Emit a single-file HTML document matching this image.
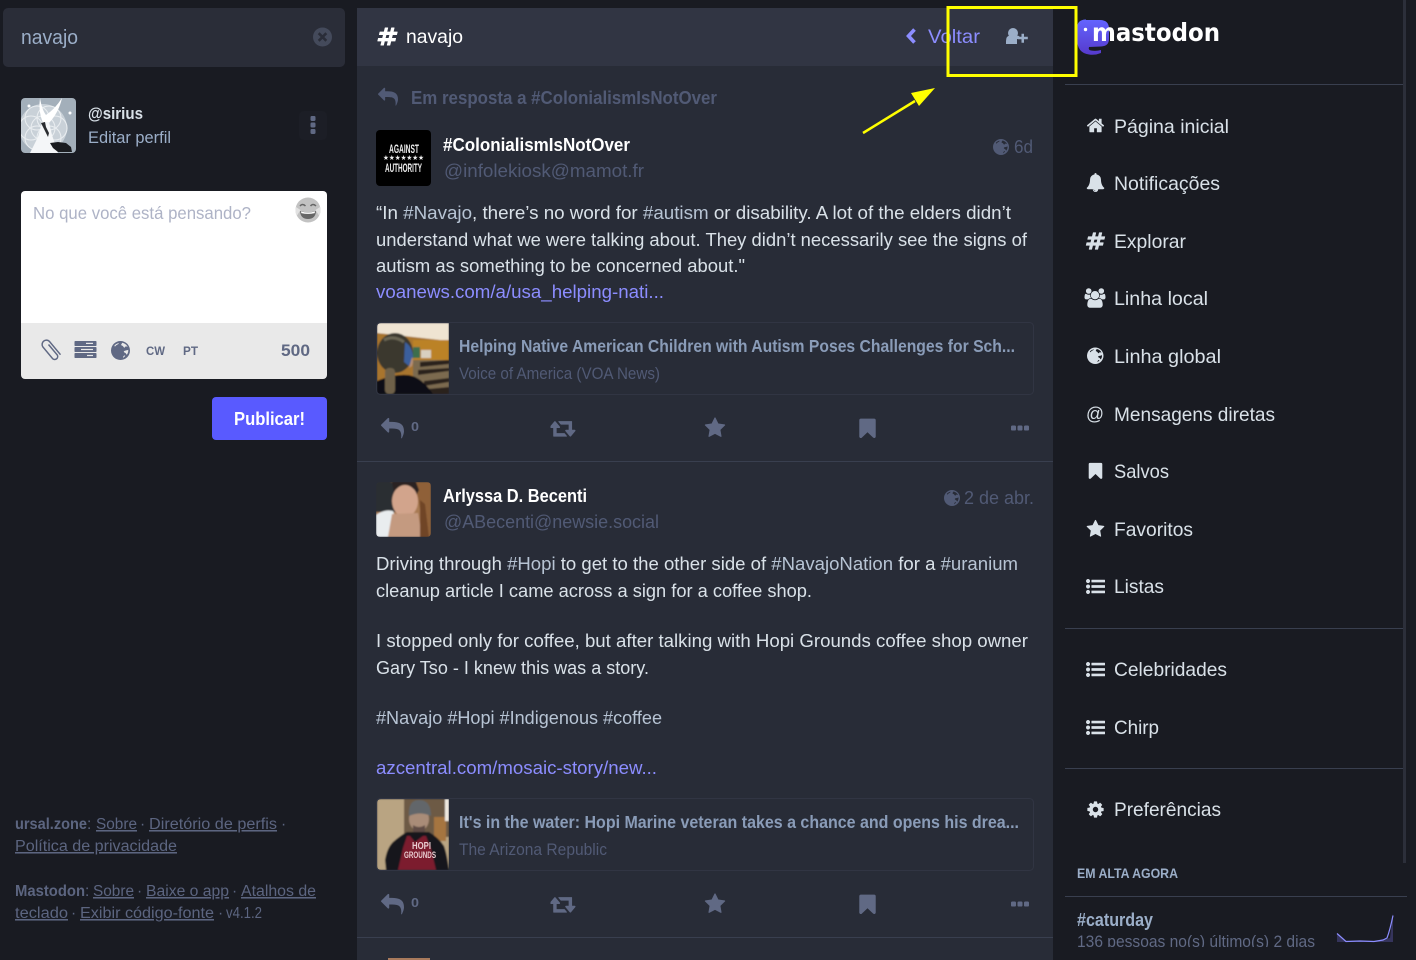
<!DOCTYPE html>
<html lang="pt"><head><meta charset="utf-8"><title>navajo - Mastodon</title>
<style>
html,body{margin:0;padding:0;width:1416px;height:960px;overflow:hidden;background:#191b22}
svg{display:block;font-family:"Liberation Sans",sans-serif}
text{white-space:pre}
.st{font-size:18.5px;fill:#d9e1e8}
.tag{fill:#b7c4d4}
.nav{font-size:19.5px;fill:#d9e1e8}
.ft{font-size:15.5px;fill:#5c6580}
.u{text-decoration:underline}
.h{font-size:18.5px;fill:#515a75}
.nm{font-size:18px;font-weight:bold;fill:#fff}
.ct{font-size:17.5px;font-weight:bold;fill:#8a9cb8}
.cs{font-size:16.5px;fill:#515a75}
</style></head><body>
<svg width="1416" height="960" viewBox="0 0 1416 960" xmlns="http://www.w3.org/2000/svg">
<defs>
<symbol id="reply" viewBox="0 0 1792 1792"><path d="M1792 1120q0 166-127 451-3 7-10.5 24t-13.5 30-13 22q-12 17-28 17-15 0-23.5-10t-8.5-25q0-9 2.5-26.5t2.5-23.5q5-68 5-123 0-101-17.5-181t-48.5-138.5-80-101-105.5-69.5-133-42.5-154-21.5-175.5-6h-224v256q0 26-19 45t-45 19-45-19l-512-512q-19-19-19-45t19-45l512-512q19-19 45-19t45 19 19 45v256h224q713 0 875 403 53 134 53 333z"/></symbol>
<symbol id="star" viewBox="0 0 1792 1792"><path d="M1728 647q0 22-26 48l-363 354 86 500q1 7 1 20 0 21-10.5 35.5t-30.5 14.5q-19 0-40-12l-449-236-449 236q-22 12-40 12-21 0-31.5-14.5t-10.5-35.5q0-6 2-20l86-500-364-354q-25-27-25-48 0-37 56-46l502-73 225-455q19-41 49-41t49 41l225 455 502 73q56 9 56 46z"/></symbol>
<symbol id="bm" viewBox="0 0 1792 1792"><path d="M1420 128q23 0 44 9 33 13 52.5 41t19.5 62v1289q0 34-19.5 62t-52.5 41q-19 8-44 8-48 0-83-32l-441-424-441 424q-36 33-83 33-23 0-44-9-33-13-52.5-41t-19.5-62v-1289q0-34 19.5-62t52.5-41q21-9 44-9h1048z"/></symbol>
<symbol id="rt" viewBox="0 0 1920 1792"><path d="M1216 1504q0 13-9.5 22.5t-22.5 9.5h-960q-8 0-13.5-2t-9-7-5.5-8-3-11.5-1-11.5v-600h-192q-26 0-45-19t-19-45q0-24 15-41l320-384q19-22 49-22t49 22l320 384q15 17 15 41 0 26-19 45t-45 19h-192v384h576q16 0 25 11l160 192q7 10 7 21zm640-416q0 24-15 41l-320 384q-20 23-49 23t-49-23l-320-384q-15-17-15-41 0-26 19-45t45-19h192v-384h-576q-16 0-25-12l-160-192q-7-9-7-20 0-13 9.5-22.5t22.5-9.5h960q8 0 13.5 2t9 7 5.5 8 3 11.5 1 11.5v600h192q26 0 45 19t19 45z"/></symbol>
<symbol id="hash" viewBox="0 0 1792 1792"><path d="M991 1024l64-256h-254l-64 256h254zm768-504l-56 224q-7 24-31 24h-327l-64 256h311q15 0 25 12 10 14 6 28l-56 224q-5 24-31 24h-327l-81 328q-7 24-31 24h-224q-16 0-26-12-9-12-6-28l78-312h-254l-81 328q-7 24-31 24h-225q-15 0-25-12-9-12-6-28l78-312h-311q-15 0-25-12-9-12-6-28l56-224q7-24 31-24h327l64-256h-311q-15 0-25-12-10-14-6-28l56-224q5-24 31-24h327l81-328q7-24 32-24h224q15 0 25 12 9 12 6 28l-78 312h254l81-328q7-24 32-24h224q15 0 25 12 9 12 6 28l-78 312h311q15 0 25 12 9 12 6 28z"/></symbol>
<symbol id="home" viewBox="0 0 1792 1792"><path d="M1472 992v480q0 26-19 45t-45 19h-384v-384h-256v384h-384q-26 0-45-19t-19-45v-480q0-1 .5-3t.5-3l575-474 575 474q1 2 1 6zm223-69l-62 74q-8 9-21 11h-3q-13 0-21-7l-692-577-692 577q-12 8-24 7-13-2-21-11l-62-74q-8-10-7-23.5t11-21.5l719-599q32-26 76-26t76 26l244 204v-195q0-14 9-23t23-9h192q14 0 23 9t9 23v408l219 182q10 8 11 21.5t-7 23.5z"/></symbol>
<symbol id="bell" viewBox="0 0 1792 1792"><path d="M912 1696q0-16-16-16-59 0-101.5-42.5t-42.5-101.5q0-16-16-16t-16 16q0 73 51.5 124.5t124.5 51.5q16 0 16-16zm816-288q0 52-38 90t-90 38h-448q0 106-75 181t-181 75-181-75-75-181h-448q-52 0-90-38t-38-90q50-42 91-88t85-119.5 74.5-158.5 50-206 19.5-260q0-152 117-282.5t307-158.5q-8-19-8-39 0-40 28-68t68-28 68 28 28 68q0 20-8 39 190 28 307 158.5t117 282.5q0 139 19.5 260t50 206 74.5 158.5 85 119.5 91 88z"/></symbol>
<symbol id="users" viewBox="0 0 1920 1792"><path d="M593 896q-162 5-265 128h-134q-82 0-138-40.5t-56-118.5q0-353 124-353 6 0 43.5 21t97.5 42.5 119 21.5q67 0 133-23-5 37-5 66 0 139 81 256zm1071 637q0 120-73 189.5t-194 69.5h-874q-121 0-194-69.5t-73-189.5q0-53 3.5-103.5t14-109 26.5-108.5 43-97.5 62-81 85.5-53.5 111.5-20q10 0 43 21.5t73 48 107 48 135 21.5 135-21.5 107-48 73-48 43-21.5q61 0 111.5 20t85.5 53.5 62 81 43 97.5 26.5 108.5 14 109 3.5 103.5zm-1024-1277q0 106-75 181t-181 75-181-75-75-181 75-181 181-75 181 75 75 181zm704 384q0 159-112.5 271.5t-271.5 112.5-271.5-112.5-112.5-271.5 112.5-271.5 271.5-112.5 271.5 112.5 112.5 271.5zm576 225q0 78-56 118.5t-138 40.5h-134q-103-123-265-128 81-117 81-256 0-29-5-66 66 23 133 23 59 0 119-21.5t97.5-42.5 43.5-21q124 0 124 353zm-128-609q0 106-75 181t-181 75-181-75-75-181 75-181 181-75 181 75 75 181z"/></symbol>
<symbol id="cog" viewBox="0 0 1792 1792"><path d="M1152 896q0-106-75-181t-181-75-181 75-75 181 75 181 181 75 181-75 75-181zm512-109v222q0 12-8 23t-20 13l-185 28q-19 54-39 91 35 50 107 138 10 12 10 25t-9 23q-27 37-99 108t-94 71q-12 0-26-9l-138-108q-44 23-91 38-16 136-29 186-7 28-36 28h-222q-14 0-24.5-8.5t-11.5-21.5l-28-184q-49-16-90-37l-141 107q-10 9-25 9-14 0-25-11-126-114-165-168-7-10-7-23 0-12 8-23 15-21 51-66.5t54-70.5q-27-50-41-99l-183-27q-13-2-21-12.5t-8-23.5v-222q0-12 8-23t19-13l186-28q14-46 39-92-40-57-107-138-10-12-10-24 0-10 9-23 26-36 98.5-107.5t94.5-71.5q13 0 26 10l138 107q44-23 91-38 16-136 29-186 7-28 36-28h222q14 0 24.5 8.5t11.5 21.5l28 184q49 16 90 37l142-107q9-9 24-9 13 0 25 10 129 119 165 170 7 8 7 22 0 12-8 23-15 21-51 66.5t-54 70.5q26 50 41 98l183 28q13 2 21 12.5t8 23.5z"/></symbol>
<symbol id="list" viewBox="0 0 1792 1792"><path d="M384 1408q0 80-56 136t-136 56-136-56-56-136 56-136 136-56 136 56 56 136zm0-512q0 80-56 136t-136 56-136-56-56-136 56-136 136-56 136 56 56 136zm1408 416v192q0 13-9.5 22.5t-22.5 9.5h-1216q-13 0-22.5-9.5t-9.5-22.5v-192q0-13 9.5-22.5t22.5-9.5h1216q13 0 22.5 9.5t9.5 22.5zm-1408-928q0 80-56 136t-136 56-136-56-56-136 56-136 136-56 136 56 56 136zm1408 416v192q0 13-9.5 22.5t-22.5 9.5h-1216q-13 0-22.5-9.5t-9.5-22.5v-192q0-13 9.5-22.5t22.5-9.5h1216q13 0 22.5 9.5t9.5 22.5zm0-512v192q0 13-9.5 22.5t-22.5 9.5h-1216q-13 0-22.5-9.5t-9.5-22.5v-192q0-13 9.5-22.5t22.5-9.5h1216q13 0 22.5 9.5t9.5 22.5z"/></symbol>
<symbol id="globe" viewBox="0 0 24 24"><path fill-rule="evenodd" d="M12 0a12 12 0 1 0 0 24a12 12 0 0 0 0-24zM14 2.200c3 .5 5.600 2.300 7 5c-1 .3-1.600-.5-2.600-.3c-1 .5-.5 1.600-1.700 1.400c-.9-.3-1-1.500-1.900-2c-.8-.6-1.900-.5-2-1.500c0-1 1-1 1.200-2.600zM21.800 11c.2 2.400-.5 4.500-1.800 6.300c-.8-.3-.8-1.400-1.600-2c-.8-.6-2-.7-2.200-1.700c-.1-1 1-1.300 2-1.500c1.300-.4 2.400-.3 3.600-1.100zM16.500 18.500c.6-.4 1.500-.3 1.500.3c-.5.9-1.700 1.800-2.800 2.300c-.3-.8.6-2 1.300-2.600zM4.500 5.500c1.300-1.300 3-2.300 5-2.800c.6 0 .3.8-.4 1.200c-1.600.7-2.900 1.700-4 3c-.5.1-.9-.8-.6-1.400z"/></symbol>
<linearGradient id="logo" x1="0" y1="0" x2="0" y2="1"><stop offset="0" stop-color="#6364ff"/><stop offset="1" stop-color="#563acc"/></linearGradient>
<filter id="b1"><feGaussianBlur stdDeviation=".7"/></filter>
<clipPath id="a1"><rect x="21" y="98" width="55" height="55" rx="4"/></clipPath>
<clipPath id="a2"><rect x="376" y="482" width="55" height="55" rx="4"/></clipPath>
<clipPath id="c1"><path d="M381 323h68v71h-68a4 4 0 0 1-4-4v-63a4 4 0 0 1 4-4z"/></clipPath>
<clipPath id="c2"><path d="M381 799h68v71h-68a4 4 0 0 1-4-4v-63a4 4 0 0 1 4-4z"/></clipPath>
<clipPath id="trend"><rect x="1060" y="897" width="356" height="50"/></clipPath>
</defs>

<rect width="1416" height="960" fill="#191b22"/>

<!-- search -->
<rect x="3" y="8" width="342" height="59" rx="5" fill="#2a2d38"/>
<text x="21" y="44" font-size="20" fill="#9baec8" textLength="57" lengthAdjust="spacingAndGlyphs">navajo</text>
<circle cx="322.500" cy="37" r="9.500" fill="#444a5b"/>
<path d="M318.700 33.200l7.600 7.600M326.300 33.200l-7.600 7.600" stroke="#2a2d38" stroke-width="2.600"/>

<!-- profile -->
<g clip-path="url(#a1)">
<rect x="21" y="98" width="55" height="55" fill="#a3afba"/>
<circle cx="43" cy="128" r="24" fill="#c9d1d8"/>
<g fill="none" stroke="#e9edf0" stroke-width="1.100"><circle cx="43" cy="128" r="12"/><circle cx="31" cy="128" r="12"/><circle cx="55" cy="128" r="12"/><circle cx="37" cy="118" r="12"/><circle cx="49" cy="118" r="12"/><circle cx="37" cy="138" r="12"/><circle cx="49" cy="138" r="12"/></g>
<path d="M62 98q-3 14-13 25l-6 0q-5-12-3-25q2 12 6 17q9-6 16-17z" fill="#fff"/>
<path d="M42 122l7 0l3 13l6 18h-28l8-16z" fill="#f4f6f8"/>
<path d="M41 123l4-1l1 5l3 6l-1 4l-3-6z" fill="#2a2c30"/>
<path d="M50 143l8-1l8 1l5 4l1 5h-14l-5-4z" fill="#1a1c20"/>
<circle cx="29" cy="106" r="1.500" fill="#fff"/><circle cx="70" cy="113" r="1.500" fill="#fff"/>
</g>
<text x="88" y="119" font-size="16.500" font-weight="bold" fill="#d9e1e8" textLength="55" lengthAdjust="spacingAndGlyphs">@sirius</text>
<text x="88" y="143" font-size="16.500" fill="#9baec8" textLength="83" lengthAdjust="spacingAndGlyphs">Editar perfil</text>
<rect x="299" y="111" width="28" height="29" rx="5" fill="#1c1e26"/>
<rect x="310.500" y="116" width="5" height="5" rx="1.200" fill="#606984"/><rect x="310.500" y="122.500" width="5" height="5" rx="1.200" fill="#606984"/><rect x="310.500" y="129" width="5" height="5" rx="1.200" fill="#606984"/>

<!-- compose -->
<path d="M25 191h298a4 4 0 0 1 4 4v128h-306v-128a4 4 0 0 1 4-4z" fill="#fff"/>
<path d="M21 323h306v52a4 4 0 0 1-4 4h-298a4 4 0 0 1-4-4z" fill="#e9e9e9"/>
<text x="33" y="219" font-size="17.500" fill="#aeb3c6" textLength="218" lengthAdjust="spacingAndGlyphs">No que você está pensando?</text>
<circle cx="308" cy="210" r="12.500" fill="#c2c2c2"/>
<path d="M300 211q8 2.500 16 0q-.5 8-8 8t-8-8z" fill="#666"/><path d="M301 211.500q7 2 14 0l-.3 1.600q-6.700 1.500-13.400 0z" fill="#fff"/>
<path d="M300 206q2.500-3 5.500 0M310.500 206q2.500-3 5.500 0" stroke="#666" stroke-width="1.500" fill="none"/>
<path d="M296 207q-1.500 6 1 8.500l3.500-5.500zM320 207q1.500 6-1 8.500l-3.500-5.500z" fill="#e2e2e2"/>

<path d="M48.500 344.500l8.800 10.500a3 3 0 0 1-4.500 3.800l-10-12a4.300 4.300 0 0 1 6.400-5.600l11.300 13.500" fill="none" stroke="#606984" stroke-width="1.500"/>
<rect x="74.500" y="341" width="22" height="5" rx=".8" fill="#606984"/><rect x="74.500" y="347" width="22" height="5" rx=".8" fill="#606984"/><rect x="74.500" y="353" width="22" height="5" rx=".8" fill="#606984"/>
<rect x="86" y="342.800" width="7" height="1.200" fill="#e9e9e9"/><rect x="81" y="348.900" width="12" height="1.200" fill="#e9e9e9"/><rect x="87" y="354.900" width="6" height="1.200" fill="#e9e9e9"/>
<use href="#globe" x="111" y="341" width="19" height="19" fill="#606984"/>
<text x="146" y="355" font-size="12" font-weight="bold" fill="#606984" textLength="19" lengthAdjust="spacingAndGlyphs">CW</text>
<text x="183" y="355" font-size="12" font-weight="bold" fill="#606984" textLength="15" lengthAdjust="spacingAndGlyphs">PT</text>
<text x="281" y="356" font-size="17" font-weight="bold" fill="#606984" textLength="29" lengthAdjust="spacingAndGlyphs">500</text>

<rect x="212" y="397" width="115" height="43" rx="4" fill="#595aff"/>
<text x="234" y="425" font-size="18" font-weight="bold" fill="#fff" textLength="71" lengthAdjust="spacingAndGlyphs">Publicar!</text>

<!-- footer -->
<text class="ft" x="15" y="829" font-weight="bold" textLength="72" lengthAdjust="spacingAndGlyphs">ursal.zone</text>
<text class="ft" x="87" y="829">:</text>
<text class="ft u" x="96" y="829" textLength="41" lengthAdjust="spacingAndGlyphs">Sobre</text>
<text class="ft" x="140" y="829">·</text>
<text class="ft u" x="149" y="829" textLength="128" lengthAdjust="spacingAndGlyphs">Diretório de perfis</text>
<text class="ft" x="281" y="829">·</text>
<text class="ft u" x="15" y="851" textLength="162" lengthAdjust="spacingAndGlyphs">Política de privacidade</text>
<text class="ft" x="15" y="896" font-weight="bold" textLength="70" lengthAdjust="spacingAndGlyphs">Mastodon</text>
<text class="ft" x="85" y="896">:</text>
<text class="ft u" x="93" y="896" textLength="41" lengthAdjust="spacingAndGlyphs">Sobre</text>
<text class="ft" x="137" y="896">·</text>
<text class="ft u" x="146" y="896" textLength="83" lengthAdjust="spacingAndGlyphs">Baixe o app</text>
<text class="ft" x="232" y="896">·</text>
<text class="ft u" x="241" y="896" textLength="75" lengthAdjust="spacingAndGlyphs">Atalhos de</text>
<text class="ft u" x="15" y="918" textLength="53" lengthAdjust="spacingAndGlyphs">teclado</text>
<text class="ft" x="71" y="918">·</text>
<text class="ft u" x="80" y="918" textLength="134" lengthAdjust="spacingAndGlyphs">Exibir código-fonte</text>
<text class="ft" x="218" y="918">·</text>
<text class="ft" x="226" y="918" textLength="36" lengthAdjust="spacingAndGlyphs">v4.1.2</text>

<!-- center column -->
<rect x="357" y="66" width="696" height="894" fill="#282c37"/>
<rect x="357" y="8" width="696" height="58" fill="#313543"/>
<use href="#hash" x="377" y="26" width="21" height="21" fill="#fff"/>
<text x="406" y="43" font-size="19.500" fill="#fff" textLength="57" lengthAdjust="spacingAndGlyphs">navajo</text>
<path d="M914.500 29.500l-6 6.500l6 6.500" fill="none" stroke="#8c8dff" stroke-width="3.600"/>
<text x="928" y="43" font-size="19.500" fill="#8c8dff" textLength="52" lengthAdjust="spacingAndGlyphs">Voltar</text>
<g fill="#9baec8"><circle cx="1013" cy="33" r="5"/><path d="M1006 44v-3q0-5.500 4.500-5.500h6q2 0 3 1v2.500h-2.500v5z"/><path d="M1021.500 33.800h2.500v3h3.800v2.500h-3.800v3.500h-2.500v-3.500h-3.800v-2.500h3.800z"/></g>

<!-- status 1 -->
<use href="#reply" x="378" y="87" width="20" height="20" fill="#515a75"/>
<text x="411" y="104" font-size="18" font-weight="bold" fill="#515a75" textLength="306" lengthAdjust="spacingAndGlyphs">Em resposta a #ColonialismIsNotOver</text>
<rect x="376" y="130" width="55" height="56" rx="4" fill="#000"/>
<text x="389" y="153" font-size="12" font-weight="bold" fill="#eee" textLength="30" lengthAdjust="spacingAndGlyphs">AGAINST</text>
<text x="383" y="160" font-size="7" fill="#eee" textLength="41" lengthAdjust="spacingAndGlyphs">★★★★★★★</text>
<text x="385" y="172" font-size="12" font-weight="bold" fill="#eee" textLength="37" lengthAdjust="spacingAndGlyphs">AUTHORITY</text>
<text class="nm" x="443" y="151" textLength="187" lengthAdjust="spacingAndGlyphs">#ColonialismIsNotOver</text>
<text class="h" x="444" y="177" textLength="200" lengthAdjust="spacingAndGlyphs">@infolekiosk@mamot.fr</text>
<use href="#globe" x="993" y="139" width="16" height="16" fill="#515a75"/>
<text x="1014" y="153" font-size="18" fill="#515a75" textLength="19" lengthAdjust="spacingAndGlyphs">6d</text>

<text class="st" x="376" y="219" textLength="635" lengthAdjust="spacingAndGlyphs">“In <tspan class="tag">#Navajo</tspan>, there’s no word for <tspan class="tag">#autism</tspan> or disability. A lot of the elders didn’t</text>
<text class="st" x="376" y="246" textLength="651" lengthAdjust="spacingAndGlyphs">understand what we were talking about. They didn’t necessarily see the signs of</text>
<text class="st" x="376" y="272" textLength="369" lengthAdjust="spacingAndGlyphs">autism as something to be concerned about."</text>
<text class="st" style="fill:#8c8dff" x="376" y="298" textLength="288" lengthAdjust="spacingAndGlyphs">voanews.com/a/usa_helping-nati...</text>

<rect x="376.500" y="322.500" width="657" height="72" rx="4" fill="none" stroke="#313543"/>
<g clip-path="url(#c1)"><g filter="url(#b1)">
<rect x="377" y="323" width="72" height="71" fill="#a8742e"/>
<path d="M377 323h72v18l-72-8z" fill="#efe4d2"/>
<rect x="413" y="340" width="36" height="20" fill="#bb8228"/>
<rect x="413" y="347" width="7" height="11" fill="#3e6e4e"/>
<rect x="421" y="350" width="10" height="8" fill="#d8d0c0"/>
<rect x="413" y="360" width="36" height="34" fill="#7c6a50"/>
<path d="M420 362l29-2v4l-29 3zM418 370l31-2v3l-31 4zM424 381l25-3v4l-25 4zM428 389l21-2v7h-21z" fill="#2b241d"/>
<ellipse cx="395" cy="353" rx="18" ry="20" fill="#3a382e"/>
<path d="M384 340q10-5 20 2" stroke="#6b6654" stroke-width="3" fill="none"/>
<path d="M405 342q8 5 8 16l-4 8l-5-4z" fill="#3a5f9c"/>
<path d="M412 357q2 4 0 9l-3 2z" fill="#b58f75"/>
<path d="M377 381q16-7 30-6q14 1 26 19h-56z" fill="#0d0f14"/>
<rect x="385" y="368" width="10" height="26" rx="4" fill="#6e6048"/>
</g></g>
<text class="ct" x="459" y="352" textLength="556" lengthAdjust="spacingAndGlyphs">Helping Native American Children with Autism Poses Challenges for Sch...</text>
<text class="cs" x="459" y="379" textLength="201" lengthAdjust="spacingAndGlyphs">Voice of America (VOA News)</text>

<use href="#reply" x="381" y="417" width="23" height="23" fill="#606984"/>
<text x="411" y="431" font-size="13" font-weight="bold" fill="#606984" textLength="8" lengthAdjust="spacingAndGlyphs">0</text>
<use href="#rt" x="550.500" y="416" width="26" height="24" fill="#606984"/>
<use href="#star" x="704" y="417" width="22" height="22" fill="#606984"/>
<use href="#bm" x="856" y="417" width="23" height="23" fill="#606984"/>
<rect x="1011" y="425.500" width="5" height="5" rx="1.300" fill="#606984"/><rect x="1017.500" y="425.500" width="5" height="5" rx="1.300" fill="#606984"/><rect x="1024" y="425.500" width="5" height="5" rx="1.300" fill="#606984"/>
<rect x="357" y="461" width="696" height="1" fill="#393f4f"/>

<!-- status 2 -->
<g clip-path="url(#a2)"><g filter="url(#b1)">
<rect x="376" y="482" width="55" height="55" fill="#a87a52"/>
<rect x="376" y="482" width="20" height="30" fill="#2a2d30"/>
<path d="M390 482h30l11 0v55h-10l-1-28l-4-20z" fill="#8f6038"/>
<path d="M392 482h24l3 8l-3 6q-12-8-22-4z" fill="#2a2420"/>
<ellipse cx="405" cy="501" rx="13" ry="16" fill="#d2a48c"/>
<path d="M376 537v-22q8-6 17-4l3 8l-8 18z" fill="#e9edef"/>
<path d="M392 514l26-1l4 24h-34z" fill="#c49a80"/>
<path d="M420 500l5 4l4 33h-9z" fill="#6f4526"/>
</g></g>
<text class="nm" x="443" y="502" textLength="144" lengthAdjust="spacingAndGlyphs">Arlyssa D. Becenti</text>
<text class="h" x="444" y="528" textLength="215" lengthAdjust="spacingAndGlyphs">@ABecenti@newsie.social</text>
<use href="#globe" x="944" y="490" width="16" height="16" fill="#515a75"/>
<text x="964" y="504" font-size="18" fill="#515a75" textLength="70" lengthAdjust="spacingAndGlyphs">2 de abr.</text>

<text class="st" x="376" y="570" textLength="642" lengthAdjust="spacingAndGlyphs">Driving through <tspan class="tag">#Hopi</tspan> to get to the other side of <tspan class="tag">#NavajoNation</tspan> for a <tspan class="tag">#uranium</tspan></text>
<text class="st" x="376" y="597" textLength="436" lengthAdjust="spacingAndGlyphs">cleanup article I came across a sign for a coffee shop.</text>
<text class="st" x="376" y="647" textLength="652" lengthAdjust="spacingAndGlyphs">I stopped only for coffee, but after talking with Hopi Grounds coffee shop owner</text>
<text class="st" x="376" y="674" textLength="273" lengthAdjust="spacingAndGlyphs">Gary Tso - I knew this was a story.</text>
<text class="st tag" x="376" y="724" textLength="286" lengthAdjust="spacingAndGlyphs">#Navajo #Hopi #Indigenous #coffee</text>
<text class="st" style="fill:#8c8dff" x="376" y="774" textLength="281" lengthAdjust="spacingAndGlyphs">azcentral.com/mosaic-story/new...</text>

<rect x="376.500" y="798.500" width="657" height="72" rx="4" fill="none" stroke="#313543"/>
<g clip-path="url(#c2)"><g filter="url(#b1)">
<rect x="377" y="799" width="72" height="71" fill="#b9a482"/>
<rect x="404" y="799" width="45" height="38" fill="#6d5a44"/>
<rect x="434" y="817" width="12" height="24" fill="#a5743f"/>
<rect x="445" y="799" width="4" height="22" fill="#efe9e0"/>
<path d="M386 870l-1-10q2-12 8-18q8-7 14-10h22q10 6 15 14q3 8 5 24z" fill="#16191f"/>
<path d="M398 870l5-22l4-12h3l5 6l8-6h3l5 13l5 21z" fill="#7c1e2e"/>
<ellipse cx="419" cy="819" rx="10" ry="12" fill="#a98c78"/>
<path d="M409 816q-1-16 10-16q12 0 12 16q-11-5-22 0z" fill="#62666a"/>
<path d="M413 825q6 4 12 0v7h-12z" fill="#5e4c44"/>
</g>
<text x="412" y="849" font-size="10" font-weight="bold" fill="#e8ccd0" textLength="19" lengthAdjust="spacingAndGlyphs">HOPI</text>
<text x="404" y="858" font-size="9" font-weight="bold" fill="#e8ccd0" textLength="32" lengthAdjust="spacingAndGlyphs">GROUNDS</text>
</g>
<text class="ct" x="459" y="828" textLength="560" lengthAdjust="spacingAndGlyphs">It's in the water: Hopi Marine veteran takes a chance and opens his drea...</text>
<text class="cs" x="459" y="855" textLength="148" lengthAdjust="spacingAndGlyphs">The Arizona Republic</text>

<use href="#reply" x="381" y="893" width="23" height="23" fill="#606984"/>
<text x="411" y="907" font-size="13" font-weight="bold" fill="#606984" textLength="8" lengthAdjust="spacingAndGlyphs">0</text>
<use href="#rt" x="550.500" y="892" width="26" height="24" fill="#606984"/>
<use href="#star" x="704" y="893" width="22" height="22" fill="#606984"/>
<use href="#bm" x="856" y="893" width="23" height="23" fill="#606984"/>
<rect x="1011" y="901.500" width="5" height="5" rx="1.300" fill="#606984"/><rect x="1017.500" y="901.500" width="5" height="5" rx="1.300" fill="#606984"/><rect x="1024" y="901.500" width="5" height="5" rx="1.300" fill="#606984"/>
<rect x="357" y="937" width="696" height="1" fill="#393f4f"/>
<rect x="388" y="958" width="42" height="2" fill="#a87a5c"/>

<!-- right nav -->
<path d="M1086 20h14q9 0 9 9v10q0 7-8 7.500l-12 .5q-1 3 2 3.500q5 1 10-.5v3q-6 2.500-12 1.500q-12-1.500-12-16v-10q0-9 9-9z" fill="url(#logo)"/>
<circle cx="1085.500" cy="29.500" r="1.700" fill="#fff"/>
<text x="1092" y="41" font-size="25" font-weight="bold" font-family="DejaVu Sans" fill="#fff" textLength="128" lengthAdjust="spacingAndGlyphs">mastodon</text>
<rect x="1065" y="84" width="340" height="1" fill="#393f4f"/>
<rect x="1065" y="628" width="340" height="1" fill="#393f4f"/>
<rect x="1065" y="768" width="340" height="1" fill="#393f4f"/>
<rect x="1403" y="0" width="3" height="863" fill="#2c2f3a"/>

<g fill="#d9e1e8">
<use href="#home" x="1086" y="116" width="19" height="19"/>
<use href="#bell" x="1086" y="173" width="19" height="19"/>
<use href="#hash" x="1085.500" y="231" width="20" height="20"/>
<use href="#users" x="1084.500" y="288" width="21" height="20"/>
<use href="#globe" x="1087" y="347.500" width="16.500" height="16.500"/>
<use href="#bm" x="1086" y="461.500" width="19" height="19"/>
<use href="#star" x="1086" y="519.500" width="19" height="19"/>
<use href="#list" x="1086" y="577" width="19" height="19"/>
<use href="#list" x="1086" y="660" width="19" height="19"/>
<use href="#list" x="1086" y="718" width="19" height="19"/>
<use href="#cog" x="1086" y="800" width="19" height="19"/>
</g>
<text x="1086" y="420" font-size="18" fill="#d9e1e8" textLength="18" lengthAdjust="spacingAndGlyphs">@</text>
<text class="nav" x="1114" y="133" textLength="115" lengthAdjust="spacingAndGlyphs">Página inicial</text>
<text class="nav" x="1114" y="190" textLength="106" lengthAdjust="spacingAndGlyphs">Notificações</text>
<text class="nav" x="1114" y="248" textLength="72" lengthAdjust="spacingAndGlyphs">Explorar</text>
<text class="nav" x="1114" y="305" textLength="94" lengthAdjust="spacingAndGlyphs">Linha local</text>
<text class="nav" x="1114" y="363" textLength="107" lengthAdjust="spacingAndGlyphs">Linha global</text>
<text class="nav" x="1114" y="421" textLength="161" lengthAdjust="spacingAndGlyphs">Mensagens diretas</text>
<text class="nav" x="1114" y="478" textLength="55" lengthAdjust="spacingAndGlyphs">Salvos</text>
<text class="nav" x="1114" y="536" textLength="79" lengthAdjust="spacingAndGlyphs">Favoritos</text>
<text class="nav" x="1114" y="593" textLength="50" lengthAdjust="spacingAndGlyphs">Listas</text>
<text class="nav" x="1114" y="676" textLength="113" lengthAdjust="spacingAndGlyphs">Celebridades</text>
<text class="nav" x="1114" y="734" textLength="45" lengthAdjust="spacingAndGlyphs">Chirp</text>
<text class="nav" x="1114" y="816" textLength="107" lengthAdjust="spacingAndGlyphs">Preferências</text>

<text x="1077" y="878" font-size="14" font-weight="bold" fill="#9baec8" textLength="101" lengthAdjust="spacingAndGlyphs">EM ALTA AGORA</text>
<rect x="1065" y="896" width="342" height="1" fill="#393f4f"/>
<g clip-path="url(#trend)">
<text x="1077" y="926" font-size="18" font-weight="bold" fill="#9baec8" textLength="76" lengthAdjust="spacingAndGlyphs">#caturday</text>
<text x="1077" y="947" font-size="16.500" fill="#606984" textLength="238" lengthAdjust="spacingAndGlyphs">136 pessoas no(s) último(s) 2 dias</text>
</g>
<path d="M1337 933.500l9 8l14-.5l14 .5l9-1.500l7-2l3-25v29h-56z" fill="#35345c"/>
<path d="M1337 933.500l9 8l14-.5l14 .5l9-1.500l4-2q3-8 6-22.500" fill="none" stroke="#8c8dff" stroke-width="1.200"/>

<!-- annotation -->
<rect x="948" y="7.500" width="128" height="68" fill="none" stroke="#ffff00" stroke-width="3"/>
<path d="M863 133l52-32" stroke="#ffff00" stroke-width="2.500"/>
<path d="M935 88l-24 5l8 13z" fill="#ffff00"/>
</svg>
</body></html>
